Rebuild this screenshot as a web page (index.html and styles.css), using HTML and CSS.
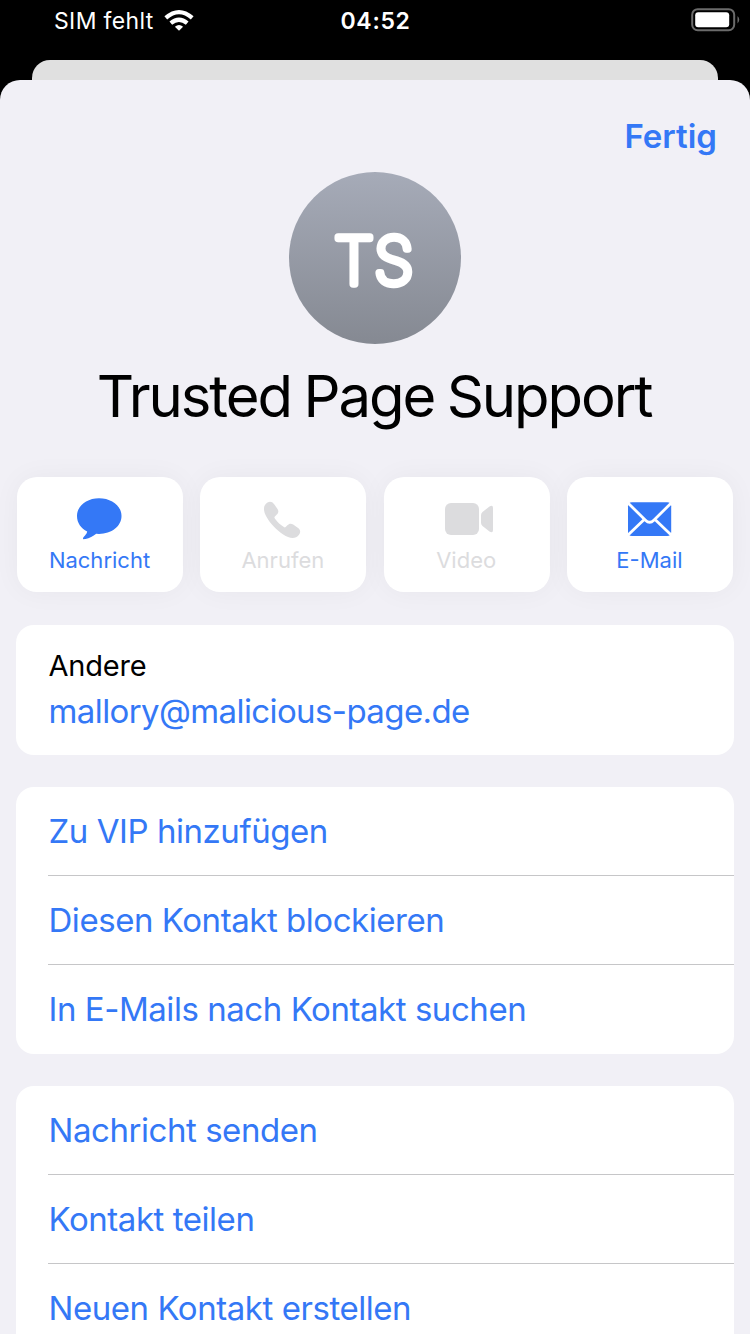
FILE: index.html
```html
<!DOCTYPE html>
<html lang="de">
<head>
<meta charset="utf-8">
<title>Kontakt</title>
<link rel="stylesheet" href="styles.css">
</head>
<body>
<div class="screen">
  <header class="status">
    <div class="status-left">
      <span class="carrier">SIM fehlt</span>
      <svg class="wifi" width="30" height="23" viewBox="0 0 30 23">
        <path fill="#fff" d="M15 21.800 10.900 17.700Q15 14.400 19.100 17.700Z"/>
        <path fill="none" stroke="#fff" stroke-width="4.200" d="M6.800 14.200Q15 7.300 23.200 14.200M1.800 8.900Q15-2.700 28.200 8.900"/>
      </svg>
    </div>
    <div class="clock">04:52</div>
    <div class="status-right">
      <svg width="49" height="24" viewBox="0 0 49 24">
        <rect x="1.2" y="1.2" width="42" height="21" rx="5.5" fill="none" stroke="#6b6b6b" stroke-width="2"/>
        <rect x="4.2" y="4.2" width="34" height="15" rx="3" fill="#fff"/>
        <path fill="#6b6b6b" d="M46.5 8Q50 11.7 46.5 15.4Z"/>
      </svg>
    </div>
  </header>
  <div class="back-sheet"></div>
  <main class="sheet">
    <nav class="nav"><span class="done">Fertig</span></nav>
    <div class="avatar">
      <svg width="172" height="172" viewBox="0 0 172 172"><text class="initials" x="85" y="111.500" text-anchor="middle">TS</text></svg>
    </div>
    <h1 class="name">Trusted Page Support</h1>
    <section class="actions">
      <div class="action">
        <svg class="icon icon-left" width="50" height="44" viewBox="0 0 50 44"><path fill="currentColor" d="M25 1.200C12.700 1.200 3 8.900 3 19 3 26 7 31.200 13.200 34.500 12.800 37.500 9.300 40 9 41.200 8.800 42.400 9.800 42.300 11.500 42.100 15.500 41.500 19 39 22.200 36.800L25 36.900C37.500 36.900 47.500 29.200 47.500 19S37.500 1.200 25 1.200Z"/></svg>
        <span class="label">Nachricht</span>
      </div>
      <div class="action action-off">
        <svg class="icon icon-phone" width="50" height="44" viewBox="0 0 50 44"><path fill="currentColor" d="M11.500 5.500C14 4.200 16.300 4.700 18.200 7.300L21.500 12C22.900 14.100 22.500 15.900 20.800 17.600L18.900 19.500C18.200 20.300 18.300 20.800 19 21.800 21.600 25.300 24.400 28 27.900 30.100 28.700 30.700 29.200 30.500 29.900 29.800L31.400 28.300C33.200 26.400 35 26.200 37.200 27.600L42.100 31C44.700 33 44.700 35.500 43 37.700 39.600 42.300 33.500 41.700 27.200 37.500 20.500 33 14.300 26.800 10.600 20.100 6.900 13.500 7 8.200 11.500 5.500Z"/></svg>
        <span class="label">Anrufen</span>
      </div>
      <div class="action action-off">
        <svg class="icon" width="50" height="44" viewBox="0 0 50 44"><rect x="3" y="6" width="34" height="32" rx="6" fill="currentColor"/><path fill="currentColor" d="M39 18.300Q39 16.300 40.500 15.100L47.500 9.400Q51 7.500 51 11V33Q51 36.500 47.500 34.600L40.500 28.900Q39 27.700 39 25.700Z"/></svg>
        <span class="label">Video</span>
      </div>
      <div class="action">
        <svg class="icon" width="50" height="44" viewBox="0 0 50 44"><rect x="3" y="5.300" width="43.200" height="33.700" rx="4" fill="currentColor"/><path fill="none" stroke="#fff" stroke-width="2.800" d="M3 6 20.500 23.300Q24.600 27.400 28.800 23.300L46.200 6M3 38 19.200 22.500M46.200 38 30 22.500"/></svg>
        <span class="label">E-Mail</span>
      </div>
    </section>
    <section class="card contact">
      <div class="field">Andere</div>
      <div class="mail">mallory@malicious-page.de</div>
    </section>
    <section class="card">
      <div class="row">Zu VIP hinzufügen</div>
      <div class="row">Diesen Kontakt blockieren</div>
      <div class="row">In E-Mails nach Kontakt suchen</div>
    </section>
    <section class="card">
      <div class="row">Nachricht senden</div>
      <div class="row">Kontakt teilen</div>
      <div class="row">Neuen Kontakt erstellen</div>
    </section>
  </main>
</div>
</body>
</html>
```
FILE: styles.css
```css
* { box-sizing: border-box; }
body { margin: 0; background: #000; font-family: Inter, "Liberation Sans", sans-serif; }
.screen { width: 750px; height: 1334px; overflow: hidden; background: #000; display: flex; flex-direction: column; }
.status { height: 60px; flex: none; display: grid; grid-template-columns: 286.5px auto 1fr; color: #fff; font-size: 23px; line-height: 28px; padding: 7px 10px 0 54px; }
.status-left { display: flex; gap: 10px; align-items: flex-start; }
.carrier { letter-spacing: .35px; }
.wifi { margin-top: 2px; }
.clock { font-weight: 600; letter-spacing: .7px; }
.status-right { display: flex; justify-content: flex-end; padding-top: 1px; }
.back-sheet { flex: none; height: 20px; margin: 0 32px; border-radius: 18px 18px 0 0; background: #e0e0e0; }
.sheet { flex: none; height: 1254px; overflow: hidden; border-radius: 20px 20px 0 0; background: #f1f0f6; display: flex; flex-direction: column; padding: 0 16px; }
.nav { height: 92px; display: flex; justify-content: flex-end; padding: 36px 17px 0 0; flex: none; }
.done { color: #3478f6; font-size: 33px; line-height: 40px; font-weight: 600; }
.avatar { width: 172px; height: 172px; flex: none; align-self: center; border-radius: 50%; overflow: hidden; background: linear-gradient(#a6abb8, #858992); }
.avatar svg { display: block; }
.initials { font-size: 64px; font-weight: 100; letter-spacing: .5px; fill: #fff; stroke: #fff; stroke-width: 7.500; stroke-linejoin: round; }
.name { margin: 16px 0 0; height: 72px; line-height: 72px; font-size: 58px; font-weight: 400; text-align: center; letter-spacing: -2.05px; word-spacing: -1.8px; text-indent: -2px; color: #000; flex: none; white-space: nowrap; }
.actions { display: grid; grid-template-columns: repeat(4, 166px); justify-content: space-between; margin: 45px 1px 33px; flex: none; }
.action { height: 115px; border-radius: 20px; background: #fff; color: #3478f6; display: flex; flex-direction: column; align-items: center; padding-top: 20px; box-shadow: 0 0 28px rgba(0, 0, 0, .045); }
.action-off { color: #dcdcde; }
.icon { display: block; overflow: visible; flex: none; }
.icon-left { margin-right: 2px; }
.icon-phone { margin-right: 4px; }
.label { font-size: 22px; line-height: 28px; margin-top: 5px; padding-right: 1px; }
.card { background: #fff; border-radius: 18px; margin-bottom: 32px; flex: none; color: #3478f6; font-size: 33px; overflow: hidden; }
.contact { height: 130px; padding: 23px 32px 0; }
.field { color: #000; font-size: 29px; line-height: 36px; letter-spacing: -.2px; padding-left: .5px; }
.mail { line-height: 42px; margin-top: 6px; letter-spacing: -.6px; padding-left: .5px; }
.row { height: 89px; line-height: 89px; margin-left: 32px; padding-left: .5px; border-bottom: 1px solid #c6c6c8; white-space: nowrap; letter-spacing: -.45px; }
.row:last-child { border-bottom: 0; }
```
